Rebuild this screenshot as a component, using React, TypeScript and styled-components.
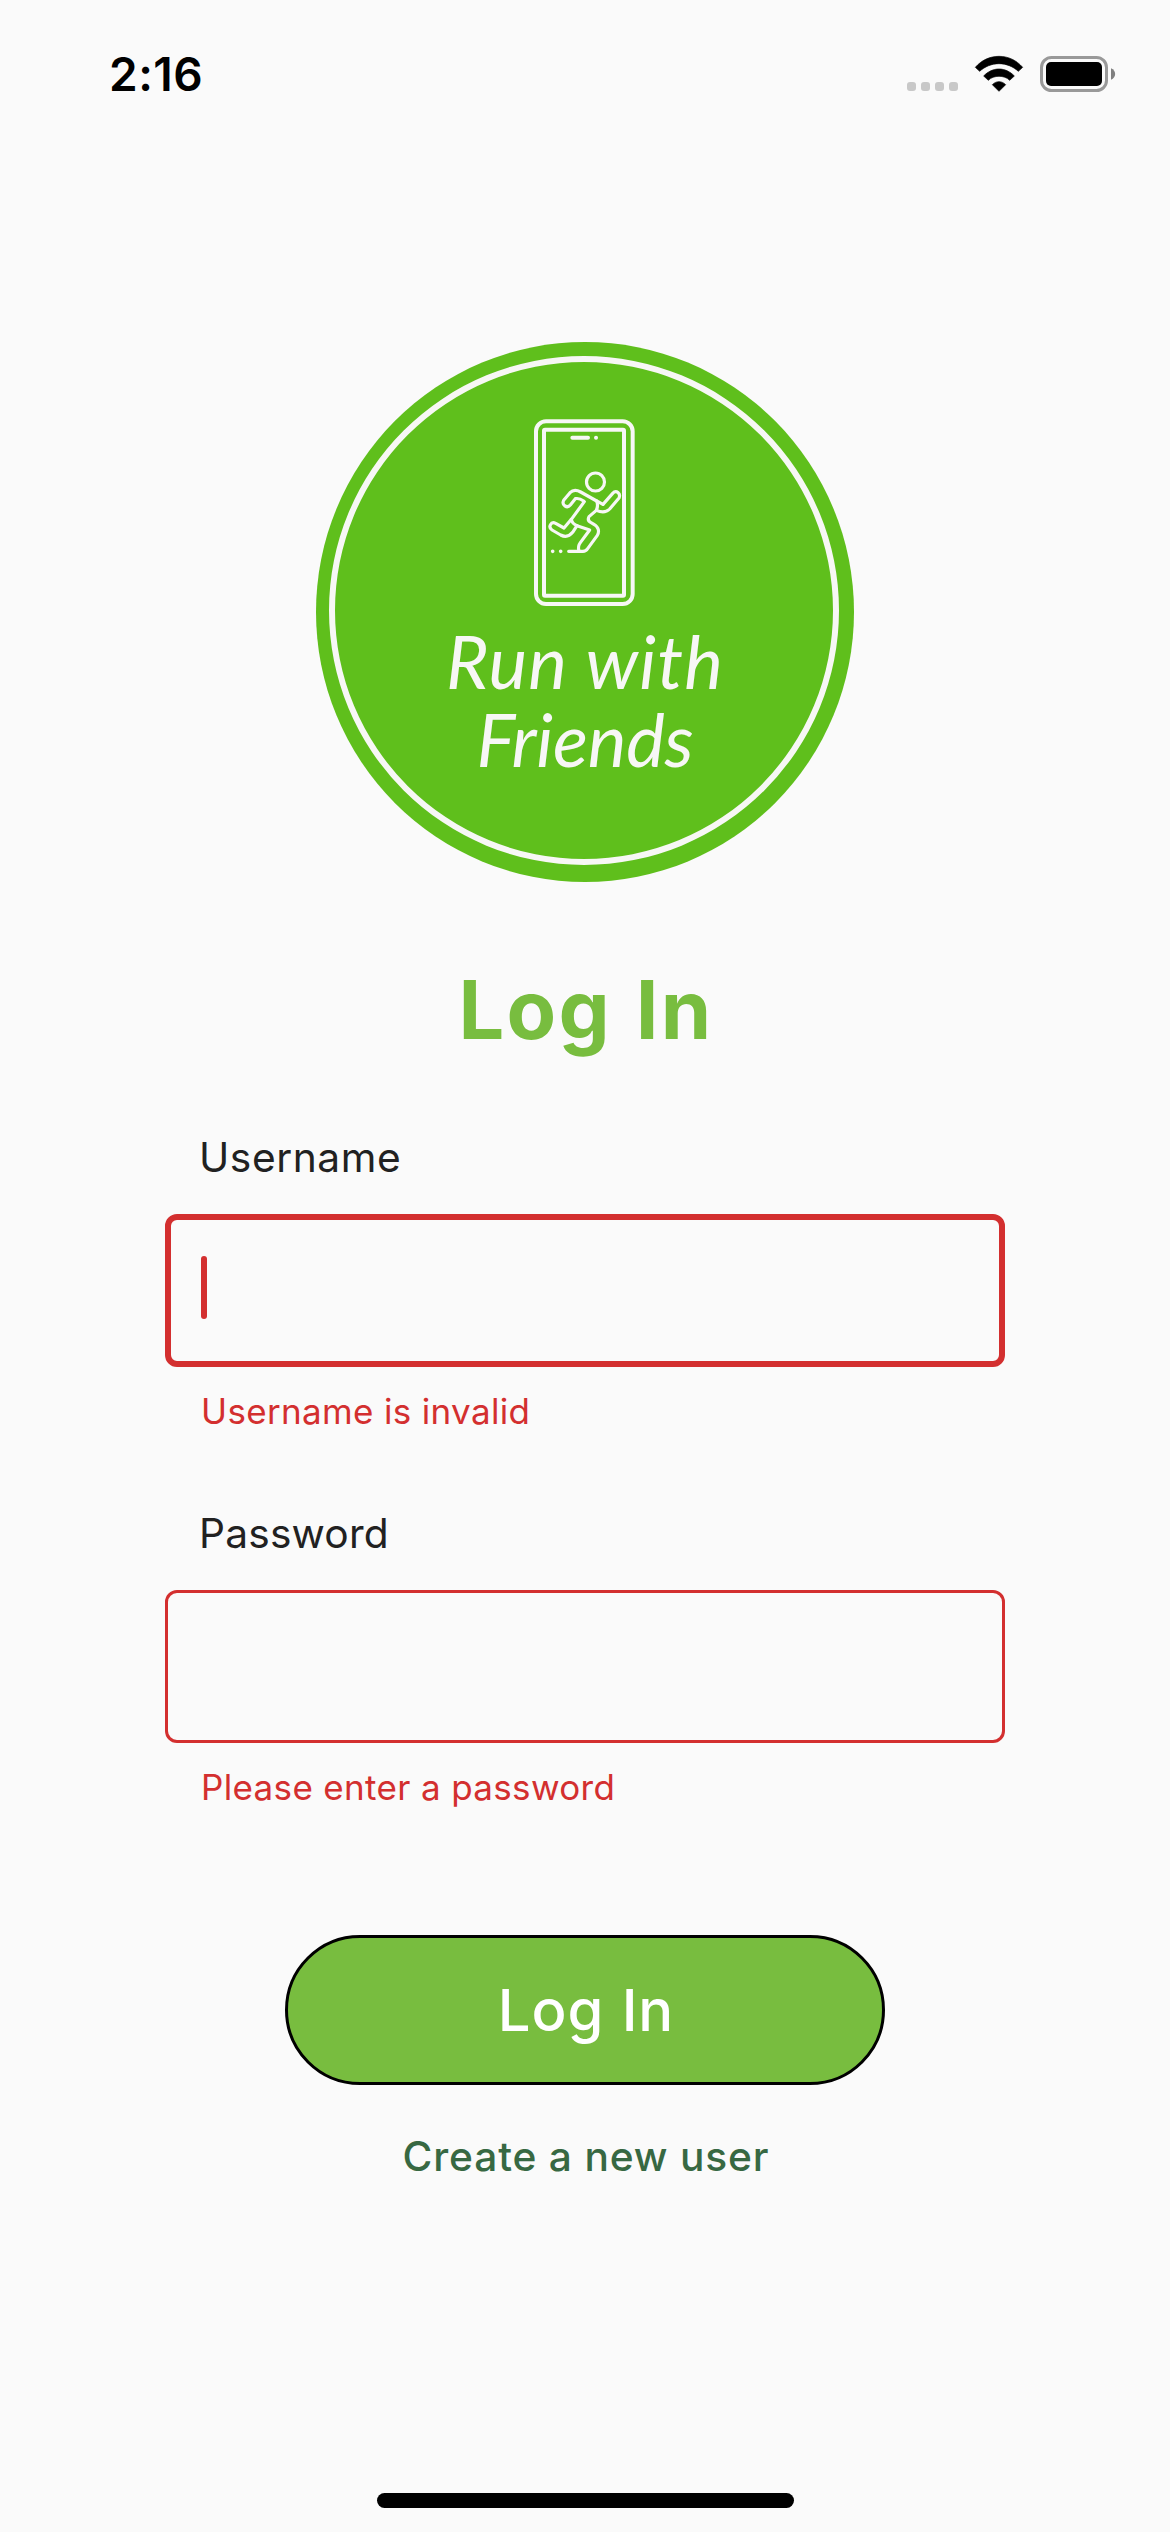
import React from "react";
import styled, { createGlobalStyle } from "styled-components";

const color = {
  page: "#fafafa",
  brand: "#78bd3f",
  logo: "#5fbf1c",
  logoInk: "#f7f7f5",
  error: "#d32f2f",
  label: "#212121",
  link: "#376842",
};

const GlobalStyle = createGlobalStyle`
  *, *::before, *::after { box-sizing: border-box; }
  body { margin: 0; background: ${color.page}; }
`;

const Screen = styled.div`
  display: flex;
  flex-direction: column;
  width: 1170px;
  height: 2532px;
  background: ${color.page};
  font-family: Inter, "Liberation Sans", sans-serif;
`;

const StatusBar = styled.header`
  display: flex;
  justify-content: space-between;
  height: 141px;
  padding: 46px 54px 0 109px;
`;

const Clock = styled.time`
  font-size: 46px;
  font-weight: 600;
  line-height: 56px;
  letter-spacing: 0.5px;
  color: #000;
`;

const StatusIcons = styled.div`
  display: flex;
  align-items: flex-start;
  padding-top: 9px;
`;

const SignalDots = styled.div`
  display: flex;
  gap: 5px;
  margin: 27px 16px 0 0;
`;

const Dot = styled.span`
  width: 9px;
  height: 9px;
  border-radius: 3px;
  background: #c8c8c8;
`;

const BatterySlot = styled.div`
  margin: 1px 0 0 16px;
`;

const Content = styled.main`
  display: flex;
  flex: 1;
  flex-direction: column;
  align-items: center;
  padding-top: 201px;
`;

const LogoBadge = styled.div`
  position: relative;
  display: flex;
  flex-direction: column;
  align-items: center;
  width: 538px;
  height: 540px;
  padding-top: 77px;
  border-radius: 50%;
  background: ${color.logo};
  color: ${color.logoInk};

  &::before {
    content: "";
    position: absolute;
    top: 14px;
    left: 13px;
    width: 510px;
    height: 509px;
    border: 6px solid ${color.logoInk};
    border-radius: 50%;
  }
`;

const LogoName = styled.div`
  display: flex;
  flex-direction: column;
  align-items: center;
  margin-top: 15px;
`;

const LogoLine = styled.span<{ $spacing: number }>`
  font-family: Lato, "Open Sans", sans-serif;
  font-size: 73px;
  font-style: italic;
  line-height: 78px;
  letter-spacing: ${(p) => p.$spacing}px;
  white-space: nowrap;
`;

const Title = styled.h1`
  margin: 78px 0 0;
  padding-left: 2px;
  font-size: 81px;
  font-weight: 700;
  line-height: 100px;
  letter-spacing: 2.3px;
  word-spacing: 2.2px;
  color: ${color.brand};
`;

const Form = styled.form`
  display: flex;
  flex-direction: column;
  align-items: center;
  gap: 76px;
  width: 840px;
  margin-top: 72px;
`;

const FieldGroup = styled.div`
  display: flex;
  flex-direction: column;
  width: 100%;
`;

const Label = styled.label<{ $spacing: number }>`
  margin-left: 34px;
  font-size: 40.7px;
  line-height: 51px;
  letter-spacing: ${(p) => p.$spacing}px;
  color: ${color.label};
`;

const InputBox = styled.div<{ $focused?: boolean }>`
  display: flex;
  align-items: center;
  height: 153px;
  margin-top: 31px;
  padding: 0 ${(p) => (p.$focused ? 30 : 33)}px;
  border: ${(p) => (p.$focused ? 6 : 3)}px solid ${color.error};
  border-radius: 12px;
`;

const Caret = styled.span`
  width: 6px;
  height: 63px;
  margin-bottom: 6px;
  border-radius: 3px;
  background: ${color.error};
`;

const ErrorText = styled.p`
  margin: 23px 0 0 36px;
  font-size: 35px;
  line-height: 42px;
  letter-spacing: 0.34px;
  color: ${color.error};
`;

const SubmitButton = styled.button`
  width: 600px;
  height: 150px;
  margin-top: 51px;
  padding: 0 0 0 2px;
  border: 3px solid #000;
  border-radius: 75px;
  background: ${color.brand};
  font-family: inherit;
  font-size: 58px;
  font-weight: 500;
  letter-spacing: 0.9px;
  word-spacing: 1px;
  color: #fff;
`;

const CreateLink = styled.a`
  margin-top: 46px;
  padding-left: 2px;
  font-size: 40.7px;
  font-weight: 500;
  line-height: 51px;
  letter-spacing: 0.83px;
  color: ${color.link};
`;

const HomeArea = styled.footer`
  display: flex;
  justify-content: center;
  padding: 0 0 24px 1px;
`;

const HomeBar = styled.span`
  width: 417px;
  height: 15px;
  border-radius: 8px;
  background: #000;
`;

const WifiIcon = () => (
  <svg width="50" height="38" viewBox="252 42 150 114" stroke="#000" strokeWidth="2" strokeLinejoin="round">
    <path d="M256 79C275 57 300 46 327 46S379 57 398 79L385 91C370 77 349 68 327 68S284 77 269 91Z" />
    <path d="M281 105C293 92 310 84 327 84S361 92 373 105L359 118C350 109 339 106 327 106S304 109 295 118Z" />
    <path d="M307 131C313 125 320 122 327 122S341 125 347 131L327 151Z" />
  </svg>
);

const BatteryIcon = () => (
  <svg width="76" height="36" viewBox="0 0 76 36">
    <rect x="1.5" y="1.5" width="65" height="33" rx="10" fill="none" stroke="#999" strokeWidth="3" />
    <rect x="6" y="6" width="56" height="24" rx="5" />
    <path d="M71 12.3C76.5 14.5 76.5 21.5 71 23.7Z" fill="#808080" />
  </svg>
);

const RunnerPhone = () => (
  <svg
    width="102"
    height="188"
    viewBox="41 27 306 564"
    fill="none"
    stroke={color.logoInk}
    strokeWidth="9.5"
    strokeLinecap="round"
    strokeLinejoin="round"
  >
    <rect x="47" y="34" width="290" height="548" rx="30" strokeWidth="12" />
    <rect x="71" y="59" width="240" height="498" rx="3" strokeWidth="12" />
    <path d="M156 83H203M227 83H227.1" strokeWidth="12" />
    <circle cx="225.5" cy="216" r="27" />
    <path d="M248 283L277 250C288 238 302 251 296 264L268 297C257 308 242 307 228 301" />
    <path d="M248 283L229 273L181 246C168 239 157 240 149 248L130 271C123 285 140 297 150 285L165 266C178 263 184 269 192 275L153 328L131 354L106 340C92 333 82 351 95 360L121 375C136 383 148 378 157 367L170 347" />
    <path d="M229 273C233 283 232 292 228 301L206 320C202 328 204 334 212 338C234 349 239 361 231 376L202 416C198 422 194 424 188 424H145" />
    <path d="M153 328C155 339 161 344 170 347L208 360L180 398C174 406 173 414 176 423" />
    <path d="M97 424H97.1M121 424H121.1" strokeWidth="11" />
  </svg>
);

export default function App() {
  return (
    <Screen>
      <GlobalStyle />
      <StatusBar>
        <Clock>2:16</Clock>
        <StatusIcons>
          <SignalDots>
            <Dot />
            <Dot />
            <Dot />
            <Dot />
          </SignalDots>
          <WifiIcon />
          <BatterySlot>
            <BatteryIcon />
          </BatterySlot>
        </StatusIcons>
      </StatusBar>
      <Content>
        <LogoBadge>
          <RunnerPhone />
          <LogoName>
            <LogoLine $spacing={1.1}>Run with</LogoLine>
            <LogoLine $spacing={-0.2}>Friends</LogoLine>
          </LogoName>
        </LogoBadge>
        <Title>Log In</Title>
        <Form>
          <FieldGroup>
            <Label $spacing={0.58}>Username</Label>
            <InputBox $focused>
              <Caret />
            </InputBox>
            <ErrorText>Username is invalid</ErrorText>
          </FieldGroup>
          <FieldGroup>
            <Label $spacing={0.2}>Password</Label>
            <InputBox />
            <ErrorText>Please enter a password</ErrorText>
          </FieldGroup>
          <SubmitButton type="button">Log In</SubmitButton>
        </Form>
        <CreateLink>Create a new user</CreateLink>
      </Content>
      <HomeArea>
        <HomeBar />
      </HomeArea>
    </Screen>
  );
}
